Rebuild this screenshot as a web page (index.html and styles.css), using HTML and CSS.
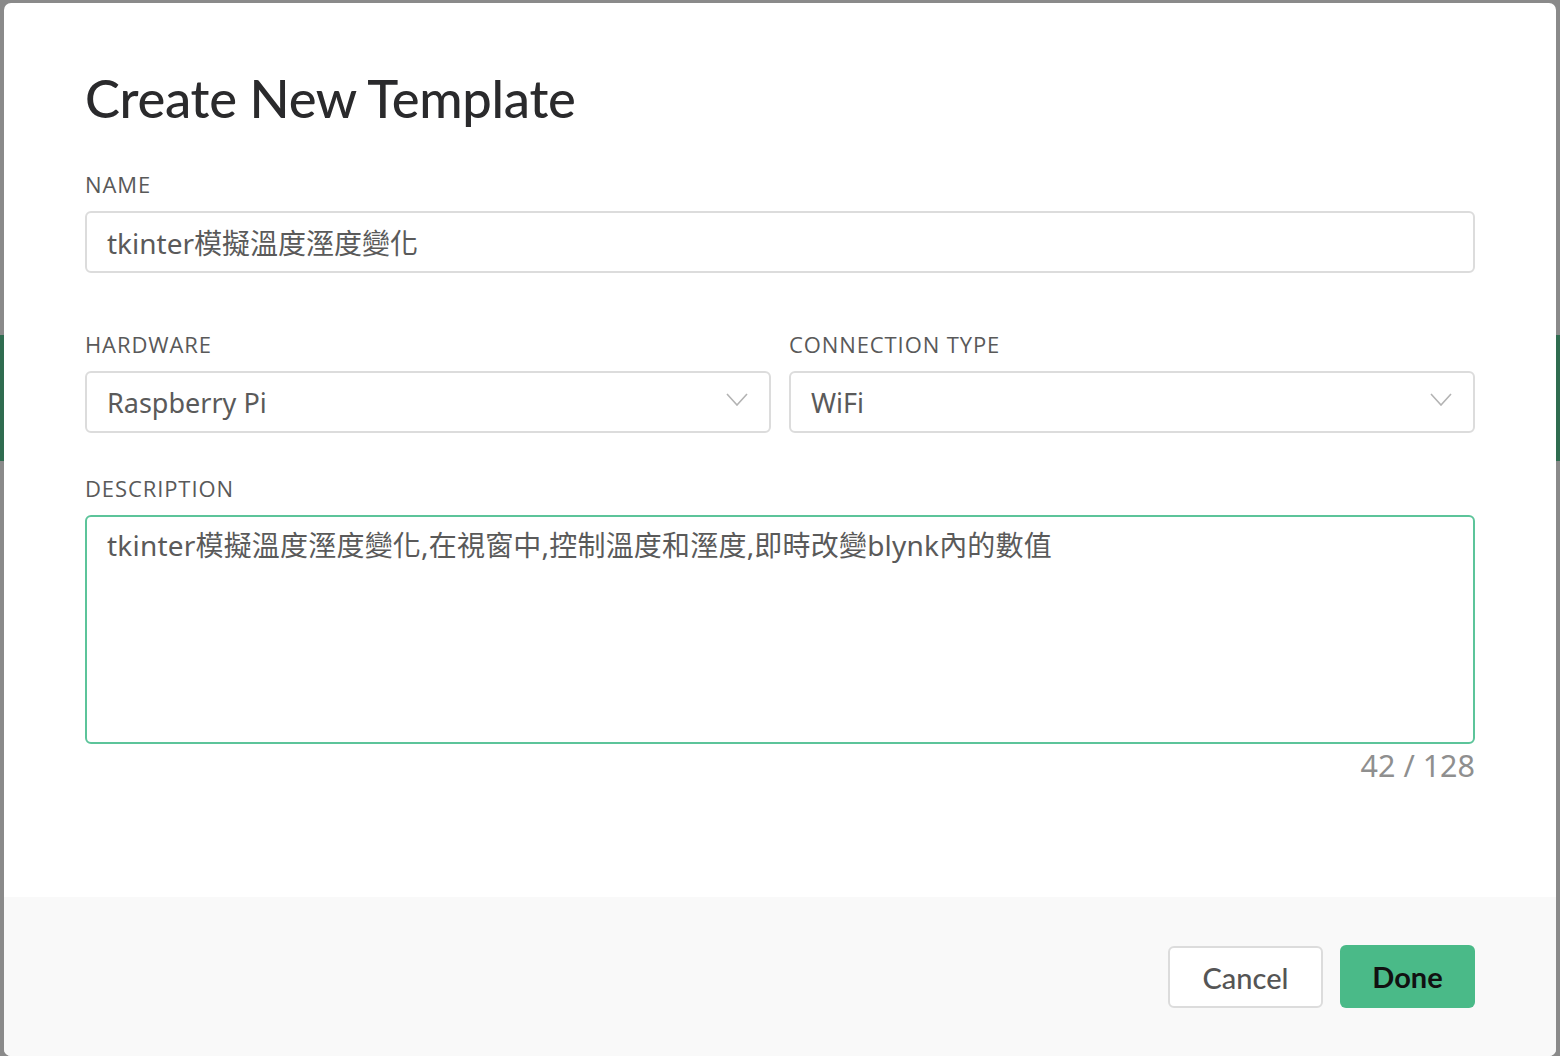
FILE: index.html
```html
<!DOCTYPE html>
<html lang="zh-Hant">
<head>
<meta charset="utf-8">
<title>Create New Template</title>
<link rel="stylesheet" href="styles.css">
</head>
<body>
<div class="backdrop">
  <div class="band-top"></div>
  <div class="band-green"></div>
</div>
<div class="modal">
  <div class="modal-body">
    <h1 class="title">Create New Template</h1>
    <div class="field">
      <div class="label">NAME</div>
      <div class="input">tkinter模擬溫度溼度變化</div>
    </div>
    <div class="row">
      <div class="field">
        <div class="label">HARDWARE</div>
        <div class="input select">
          <span>Raspberry Pi</span>
          <svg class="chev" width="22" height="13" viewBox="0 0 22 13"><path d="M1 1 L11 12 L21 1" fill="none" stroke="#b3b3b3" stroke-width="1.6"/></svg>
        </div>
      </div>
      <div class="field">
        <div class="label">CONNECTION TYPE</div>
        <div class="input select">
          <span>WiFi</span>
          <svg class="chev" width="22" height="13" viewBox="0 0 22 13"><path d="M1 1 L11 12 L21 1" fill="none" stroke="#b3b3b3" stroke-width="1.6"/></svg>
        </div>
      </div>
    </div>
    <div class="field desc-field">
      <div class="label">DESCRIPTION</div>
      <div class="textarea">tkinter模擬溫度溼度變化,在視窗中,控制溫度和溼度,即時改變blynk內的數值</div>
      <div class="counter">42 / 128</div>
    </div>
  </div>
  <div class="modal-footer">
    <button class="btn btn-cancel">Cancel</button>
    <button class="btn btn-done">Done</button>
  </div>
</div>
</body>
</html>
```
FILE: styles.css
```css
html, body {
  margin: 0;
  padding: 0;
  height: 100%;
  overflow: hidden;
}
body {
  background: #8a8a8a;
  position: relative;
}
.backdrop {
  display: flex;
  flex-direction: column;
}
.band-top {
  height: 335px;
}
.band-green {
  height: 126px;
  background: #2f6c50;
}
.modal {
  position: absolute;
  left: 4px;
  top: 3px;
  width: 1552px;
  height: 1053px;
  background: #ffffff;
  border-radius: 7px;
  display: flex;
  flex-direction: column;
  overflow: hidden;
}
.modal-body {
  flex: 1;
  padding: 69px 81px 0 81px;
  display: flex;
  flex-direction: column;
}
.title {
  margin: 0 0 48px 0;
  font-family: "Lato", "Inter", sans-serif;
  font-weight: 500;
  font-size: 52.5px;
  line-height: 52px;
  color: #2a2a2c;
  letter-spacing: -0.3px;
}
.field {
  display: flex;
  flex-direction: column;
}
.label {
  font-family: "Open Sans", "Noto Sans", sans-serif;
  font-size: 22px;
  line-height: 24px;
  letter-spacing: 0.9px;
  color: #595959;
  margin-bottom: 15px;
}
.input {
  box-sizing: border-box;
  height: 62px;
  border: 2px solid #dcdcdc;
  border-radius: 6px;
  padding: 0 20px;
  display: flex;
  align-items: center;
  font-family: "Noto Sans", "Noto Sans CJK TC", sans-serif;
  font-size: 28px;
  color: #5a5a5a;
}
.row {
  margin-top: 59px;
  display: grid;
  grid-template-columns: 1fr 1fr;
  gap: 18px;
}
.select {
  justify-content: space-between;
  padding-right: 21px;
  font-size: 27px;
}
.chev {
  display: block;
  margin-bottom: 5px;
}
.desc-field {
  margin-top: 43px;
}
.textarea {
  box-sizing: border-box;
  height: 229px;
  border: 2px solid #5cc49a;
  border-radius: 6px;
  padding: 9px 20px;
  font-family: "Noto Sans", "Noto Sans CJK TC", sans-serif;
  font-size: 28px;
  line-height: 38px;
  color: #5a5a5a;
  letter-spacing: 0.2px;
}
.counter {
  margin-top: 3px;
  text-align: right;
  font-family: "Noto Sans", sans-serif;
  font-size: 30.5px;
  line-height: 36px;
  color: #8f8f8f;
}
.modal-footer {
  height: 159px;
  background: #f9f9f9;
  box-sizing: border-box;
  padding: 48px 81px 0 81px;
  display: flex;
  justify-content: flex-end;
  align-items: flex-start;
  gap: 17px;
}
.btn {
  box-sizing: border-box;
  height: 63px;
  border-radius: 6px;
  font-family: "Lato", "Inter", sans-serif;
  font-size: 29px;
  cursor: pointer;
  padding: 0;
}
.btn-cancel {
  margin-top: 1px;
  height: 62px;
  width: 155px;
  background: #ffffff;
  border: 2px solid #dcdcdc;
  color: #555555;
  font-weight: 500;
}
.btn-done {
  width: 135px;
  background: #4aba88;
  border: none;
  color: #111111;
  font-weight: 700;
}
```
